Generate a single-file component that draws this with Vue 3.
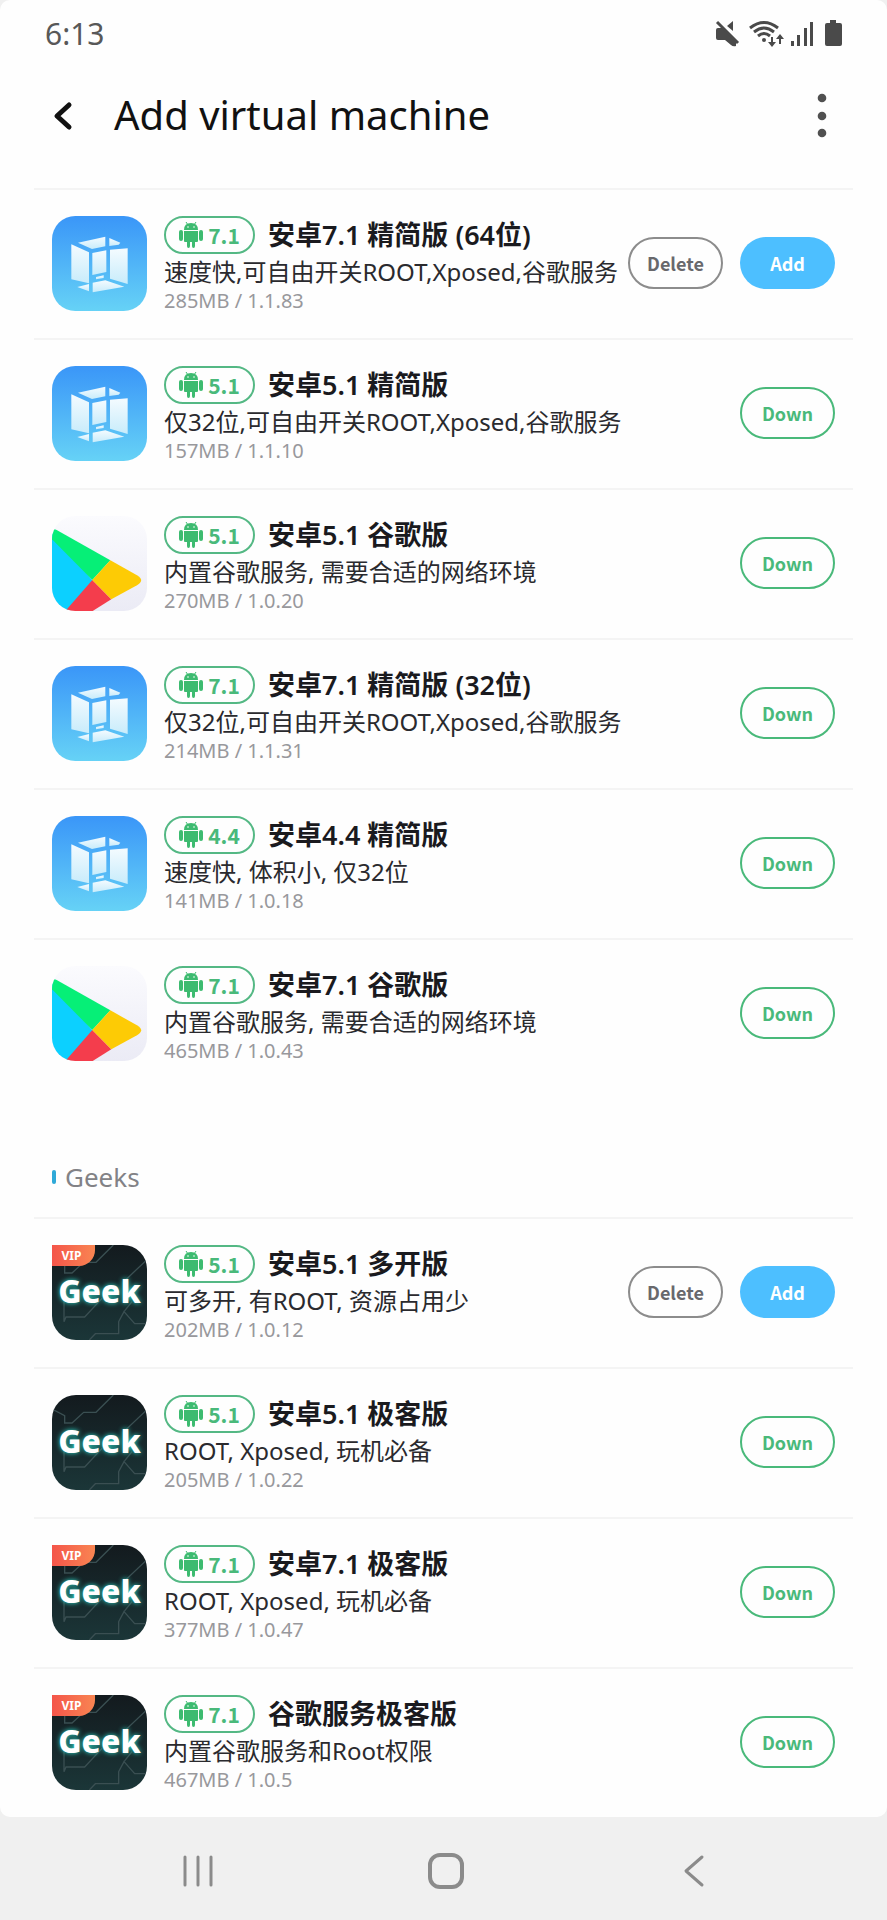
<script setup>
const base = [
  { icon: 'cube', ver: '7.1', title: '安卓7.1 精简版 (64位)', desc: '速度快,可自由开关ROOT,Xposed,谷歌服务', meta: '285MB / 1.1.83', installed: true },
  { icon: 'cube', ver: '5.1', title: '安卓5.1 精简版', desc: '仅32位,可自由开关ROOT,Xposed,谷歌服务', meta: '157MB / 1.1.10' },
  { icon: 'play', ver: '5.1', title: '安卓5.1 谷歌版', desc: '内置谷歌服务, 需要合适的网络环境', meta: '270MB / 1.0.20' },
  { icon: 'cube', ver: '7.1', title: '安卓7.1 精简版 (32位)', desc: '仅32位,可自由开关ROOT,Xposed,谷歌服务', meta: '214MB / 1.1.31' },
  { icon: 'cube', ver: '4.4', title: '安卓4.4 精简版', desc: '速度快, 体积小, 仅32位', meta: '141MB / 1.0.18' },
  { icon: 'play', ver: '7.1', title: '安卓7.1 谷歌版', desc: '内置谷歌服务, 需要合适的网络环境', meta: '465MB / 1.0.43' },
]
const geeks = [
  { icon: 'geek', vip: true, ver: '5.1', title: '安卓5.1 多开版', desc: '可多开, 有ROOT, 资源占用少', meta: '202MB / 1.0.12', installed: true },
  { icon: 'geek', ver: '5.1', title: '安卓5.1 极客版', desc: 'ROOT, Xposed, 玩机必备', meta: '205MB / 1.0.22' },
  { icon: 'geek', vip: true, ver: '7.1', title: '安卓7.1 极客版', desc: 'ROOT, Xposed, 玩机必备', meta: '377MB / 1.0.47' },
  { icon: 'geek', vip: true, ver: '7.1', title: '谷歌服务极客版', desc: '内置谷歌服务和Root权限', meta: '467MB / 1.0.5' },
]
const sections = [
  { name: '', items: base },
  { name: 'Geeks', items: geeks },
]
</script>

<template>
  <div class="page">
    <div class="sheet">
      <div class="status">
        <span class="clock">6:13</span>
        <svg class="status-icons" width="128" height="28" viewBox="0 0 128 28" fill="#4a4a4a">
          <path d="M1 10Q1 8 3 8H8L21 21V26Q18 27 16 25L10 20H3Q1 20 1 18Z" />
          <path d="M12 6L18 1V11Z" />
          <path d="M5 1L25 21" stroke="#fefefe" stroke-width="2" />
          <path d="M2 2L23 23" stroke="#4a4a4a" stroke-width="3" />
          <g fill="none" stroke="#4a4a4a" stroke-width="3">
            <path d="M35 8Q49 -3 63 8" />
            <path d="M39 12Q49 4 59 12" />
            <path d="M43 16Q49 11 55 16" />
          </g>
          <circle cx="49" cy="20" r="2" />
          <path d="M56 17H58V22H61L57 27L53 22H56ZM64 24H66V19H69L65 14L61 19H64Z" />
          <path d="M76 21H79V26H76ZM82 15H85V26H82ZM89 8H92V26H89ZM95 2H98V26H95Z" />
          <path d="M115 0H121V3H125Q127 3 127 5V24Q127 26 125 26H112Q110 26 110 24V5Q110 3 112 3H115Z" />
        </svg>
      </div>

      <header class="bar">
        <button class="icon-btn" aria-label="Back">
          <svg width="20" height="30" viewBox="0 0 20 30" fill="none" stroke="#111" stroke-width="5" stroke-linecap="round" stroke-linejoin="round">
            <path d="M16 4L4 15L16 26" />
          </svg>
        </button>
        <h1>Add virtual machine</h1>
        <button class="icon-btn" aria-label="More options">
          <svg width="10" height="46" viewBox="0 0 10 46" fill="#505050">
            <circle cx="5" cy="5" r="4.3" /><circle cx="5" cy="23" r="4.3" /><circle cx="5" cy="40" r="4.3" />
          </svg>
        </button>
      </header>

      <section v-for="s in sections" :key="s.name">
        <h2 v-if="s.name">{{ s.name }}</h2>
        <ul>
          <li v-for="(it, i) in s.items" :key="i">
            <svg v-if="it.icon === 'cube'" class="app" viewBox="0 0 285 285">
              <defs>
                <linearGradient id="sky" x1="0" y1="0" x2="0" y2="1">
                  <stop offset="0" stop-color="#3a96f8" /><stop offset="1" stop-color="#66d2f6" />
                </linearGradient>
                <linearGradient id="pane" x1="0" y1="0" x2="0" y2="1">
                  <stop offset="0" stop-color="#f4fbff" /><stop offset="1" stop-color="#c8ecfb" />
                </linearGradient>
              </defs>
              <rect width="285" height="285" rx="70" fill="url(#sky)" />
              <g fill="url(#pane)">
                <path d="M78 80L160 62V91L120 99Z" />
                <path d="M172 66L205 80L200 86L172 90Z" />
                <path d="M58 85L111 109V202L58 190Z" />
                <path d="M121 111L163 103V168L121 177Z" />
                <path d="M174 101L227 97V204L174 188Z" />
                <path d="M76 213L111 204V226Z" />
                <path d="M122 200L160 193L217 212L122 229Z" />
                <path d="M132 183L155 178V186L132 190Z" />
              </g>
            </svg>
            <svg v-else-if="it.icon === 'play'" class="app" viewBox="0 0 285 285">
              <defs>
                <linearGradient id="mist" x1="0" y1="0" x2="0" y2="1">
                  <stop offset="0" stop-color="#fbfbfe" /><stop offset="1" stop-color="#ebebf5" />
                </linearGradient>
                <clipPath id="tile"><rect width="285" height="285" rx="70" /></clipPath>
              </defs>
              <g clip-path="url(#tile)">
                <rect width="285" height="285" fill="url(#mist)" />
                <path d="M0 44L122 194L46 285H0Z" fill="#0cd0ff" />
                <path d="M0 48Q2 36 14 42L175 133L121 192L0 70Z" fill="#06ef77" />
                <path d="M121 192L178 250L122 285H40Z" fill="#f43d4c" />
                <path d="M175 133L255 178Q280 193 255 208L178 250L121 192Z" fill="#fdcb05" />
              </g>
            </svg>
            <div v-else class="app geek" :class="{ premium: it.vip }">
              <svg viewBox="0 0 285 285" fill="none" stroke="#3a4f52" stroke-width="4">
                <path d="M184 0L132 52H95L60 84H38V62L0 42" />
                <path d="M285 44L215 110V150" />
                <path d="M150 160L98 216H42L36 230V160" />
                <path d="M285 236H248L216 200L200 230V266H130L112 285" />
                <path d="M216 200L240 170" />
              </svg>
              <span class="geek-name">Geek</span>
              <span v-if="it.vip" class="vip">VIP</span>
            </div>

            <div class="info">
              <div class="head">
                <span class="badge">
                  <svg width="24" height="26" viewBox="0 0 24 26" fill="#3dbb70">
                    <path d="M5 8Q5 1 12 1T19 8Z" />
                    <path d="M7 0L9 3M17 0L15 3" stroke="#3dbb70" />
                    <path d="M5 9H19V19Q19 20 18 20H16V24Q16 26 14.500 26T13 24V20H11V24Q11 26 9.500 26T8 24V20H6Q5 20 5 19Z" />
                    <rect y="8" width="4" height="11" rx="2" /><rect x="20" y="8" width="4" height="11" rx="2" />
                    <circle cx="9" cy="5" r="0.800" fill="#fff" /><circle cx="15" cy="5" r="0.800" fill="#fff" />
                  </svg>
                  {{ it.ver }}
                </span>
                <h3>{{ it.title }}</h3>
              </div>
              <p class="desc">{{ it.desc }}</p>
              <p class="meta">{{ it.meta }}</p>
            </div>

            <div class="actions">
              <template v-if="it.installed">
                <button class="pill gray">Delete</button>
                <button class="pill blue">Add</button>
              </template>
              <button v-else class="pill green">Down</button>
            </div>
          </li>
        </ul>
      </section>
    </div>

    <nav>
      <button aria-label="Recent apps">
        <svg width="34" height="34" viewBox="0 0 34 34" stroke="#8b8b8b" stroke-width="3" stroke-linecap="round">
          <path d="M4 3V31M17 3V31M30 3V31" />
        </svg>
      </button>
      <button aria-label="Home">
        <svg width="36" height="36" viewBox="0 0 36 36" fill="none" stroke="#8b8b8b" stroke-width="4">
          <rect x="2" y="2" width="32" height="32" rx="10" />
        </svg>
      </button>
      <button aria-label="Back">
        <svg width="34" height="34" viewBox="0 0 34 34" fill="none" stroke="#8b8b8b" stroke-width="3" stroke-linecap="round" stroke-linejoin="round">
          <path d="M25 3L9 17L25 31" />
        </svg>
      </button>
    </nav>
  </div>
</template>

<style>
body {
  margin: 0;
  background: #f0f0f0;
}
</style>

<style scoped>
.page {
  min-height: 100vh;
  display: flex;
  flex-direction: column;
  background: #f0f0f0;
  font-family: "Noto Sans", "Noto Sans CJK SC", sans-serif;
  color: #1a1a1e;
}
.sheet {
  background: #fefefe;
  border-radius: 10px;
}
button {
  padding: 0;
  border: 0;
  background: none;
  font: inherit;
  color: inherit;
}
svg {
  display: block;
}
h1, h2, h3, p, ul {
  margin: 0;
  padding: 0;
}
.status {
  height: 68px;
  padding: 0 44px 0 45px;
  display: flex;
  align-items: center;
  justify-content: space-between;
}
.clock {
  font-size: 30px;
  line-height: 40px;
  font-weight: 400;
  color: #585858;
}
.bar {
  height: 96px;
  display: flex;
  align-items: center;
  padding: 0 60px 0 53px;
  margin-bottom: 24px;
}
h1 {
  flex: 1;
  margin-left: 41px;
  padding-bottom: 2px;
  font-size: 40px;
  line-height: 48px;
  font-weight: 400;
  color: #111;
}
ul {
  list-style: none;
  margin: 0 34px;
}
li {
  box-sizing: border-box;
  height: 150px;
  border-top: 2px solid #f4f4f4;
  padding: 0 18px 2px;
  display: flex;
  align-items: center;
}
.app {
  width: 95px;
  height: 95px;
  flex: none;
  margin-right: 17px;
}
.geek {
  position: relative;
  overflow: hidden;
  border-radius: 24px;
  background: linear-gradient(#131a1e, #1b3638);
}
.geek.premium {
  border-top-left-radius: 0;
}
.geek-name {
  position: absolute;
  inset: 0;
  line-height: 92px;
  text-align: center;
  font-size: 32px;
  font-weight: 800;
  color: #fff;
  text-shadow: 0 0 5px #2fe0cf;
}
.vip {
  position: absolute;
  left: 0;
  top: 0;
  box-sizing: border-box;
  width: 43px;
  padding-right: 4px;
  line-height: 21px;
  text-align: center;
  font-size: 12px;
  font-weight: 700;
  color: #fff;
  background: linear-gradient(90deg, #f4554a, #f98552);
  border-bottom-right-radius: 16px;
}
.info {
  flex: 1;
  min-width: 0;
  white-space: nowrap;
}
.head {
  display: flex;
  align-items: center;
  height: 38px;
}
.badge {
  box-sizing: border-box;
  width: 91px;
  height: 38px;
  border: 2px solid #54b884;
  border-radius: 19px;
  display: flex;
  align-items: center;
  justify-content: center;
  gap: 5px;
  font-family: "Noto Sans CJK SC", sans-serif;
  font-size: 21px;
  font-weight: 700;
  color: #49b97a;
}
h3 {
  margin-left: 13px;
  font-size: 27px;
  line-height: 38px;
  font-weight: 600;
}
.desc {
  font-size: 24px;
  line-height: 36px;
  font-weight: 400;
  color: #2a2a2e;
}
.meta {
  font-size: 20px;
  line-height: 21px;
  font-weight: 400;
  color: #98989c;
}
.actions {
  display: flex;
  gap: 17px;
}
.pill {
  box-sizing: border-box;
  width: 95px;
  height: 52px;
  border-radius: 26px;
  font-family: "Noto Sans CJK SC", sans-serif;
  font-size: 18px;
  font-weight: 700;
}
.gray {
  border: 2px solid #8c8c8c;
  color: #68686c;
}
.blue {
  background: #4dbfff;
  color: #fff;
}
.green {
  border: 2px solid #49b97a;
  color: #49b97a;
}
h2 {
  margin: 66px 52px 0;
  height: 63px;
  display: flex;
  align-items: flex-start;
  gap: 9px;
  font-size: 26px;
  line-height: 46px;
  font-weight: 400;
  color: #828286;
}
h2::before {
  content: "";
  width: 4px;
  height: 14px;
  margin-top: 16px;
  border-radius: 2px;
  background: #2fa9d8;
}
nav {
  flex: 1;
  min-height: 98px;
  padding: 4px 69px 0 74px;
  display: flex;
  align-items: center;
}
nav button {
  flex: 1;
  display: flex;
  justify-content: center;
}
</style>
